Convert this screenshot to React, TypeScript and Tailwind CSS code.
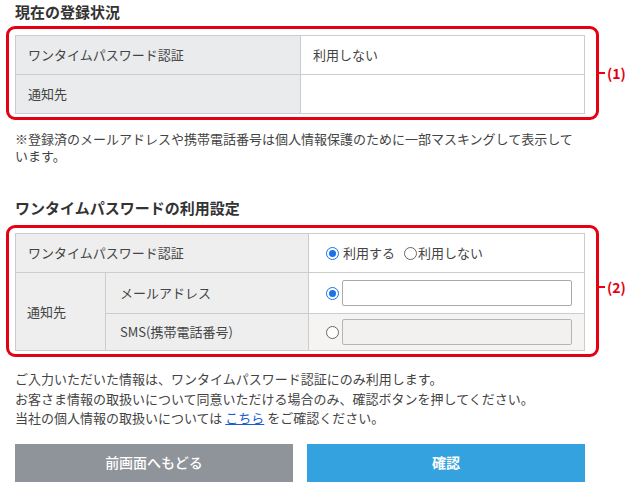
import React from "react";

function Radio({ checked }: { checked?: boolean }) {
  return checked ? (
    <span className="w-[13px] h-[13px] rounded-full border-[1.5px] border-[#1a73e8] bg-white flex items-center justify-center shrink-0">
      <span className="w-[7px] h-[7px] rounded-full bg-[#1a73e8]" />
    </span>
  ) : (
    <span className="block w-[13px] h-[13px] rounded-full border border-[#666] bg-white shrink-0" />
  );
}

function RedBox({ label, children, pt, labelShift }: { label: string; children: React.ReactNode; pt: string; labelShift: string }) {
  return (
    <div className={`relative w-[593px] border-[3px] border-[#e50012] rounded-[9px] pl-[6px] pr-[11px] pb-[3px] ${pt}`}>
      {children}
      <div className={`absolute left-full top-1/2 flex items-center ${labelShift}`}>
        <span className="w-[9px] h-[2px] bg-[#e50012]" />
        <span className="ml-[2px] text-[14px] font-bold leading-none text-[#e50012]">{label}</span>
      </div>
    </div>
  );
}

export default function App() {
  return (
    <div className="w-[630px] h-[490px] bg-white overflow-hidden text-[#444] font-['Meiryo','Noto_Sans_CJK_JP',sans-serif]">
      <div className="pl-[6px] pt-[2px]">
        <h2 className="pl-[9px] text-[15px] font-bold leading-[20px] text-[#333]">現在の登録状況</h2>

        <div className="mt-[4px]">
          <RedBox label="(1)" pt="pt-[6px]" labelShift="-translate-y-1/2">
            <div className="border border-[#cccccc] text-[13px]">
              <div className="flex h-[39px] border-b border-[#cccccc]">
                <div className="w-[285px] bg-[#eaebed] border-r border-[#cccccc] pl-[12px] flex items-center">ワンタイムパスワード認証</div>
                <div className="flex-1 pl-[12px] flex items-center">利用しない</div>
              </div>
              <div className="flex h-[38px]">
                <div className="w-[285px] bg-[#eaebed] border-r border-[#cccccc] pl-[12px] flex items-center">通知先</div>
                <div className="flex-1" />
              </div>
            </div>
          </RedBox>
        </div>

        <p className="pl-[9px] mt-[10px] w-[571px] text-[13px] leading-[17px]">
          ※登録済のメールアドレスや携帯電話番号は個人情報保護のために一部マスキングして表示しています。
        </p>

        <h2 className="pl-[9px] mt-[34px] text-[15px] font-bold leading-[20px] text-[#333]">ワンタイムパスワードの利用設定</h2>

        <div className="mt-[7px]">
          <RedBox label="(2)" pt="pt-[5px]" labelShift="-translate-y-[calc(50%+4px)]">
            <div className="border border-[#cccccc] text-[13px]">
              <div className="flex h-[39px] border-b border-[#cccccc]">
                <div className="w-[293px] bg-[#eeeeee] border-r border-[#cccccc] pl-[12px] flex items-center">ワンタイムパスワード認証</div>
                <div className="flex-1 pl-[17px] flex items-center">
                  <Radio checked />
                  <span className="ml-[4px]">利用する</span>
                  <span className="ml-[9px] flex items-center"><Radio /></span>
                  <span className="ml-[1px]">利用しない</span>
                </div>
              </div>
              <div className="flex">
                <div className="w-[90px] bg-[#eeeeee] border-r border-[#cccccc] pl-[11px] flex items-center">通知先</div>
                <div className="flex-1 flex flex-col">
                  <div className="flex h-[41px] border-b border-[#cccccc]">
                    <div className="w-[203px] bg-[#eeeeee] border-r border-[#cccccc] pl-[14px] flex items-center">メールアドレス</div>
                    <div className="flex-1 pl-[17px] flex items-center">
                      <Radio checked />
                      <span className="ml-[3px] w-[230px] h-[26px] border border-[#aaaaaa] rounded-[2px] bg-white" />
                    </div>
                  </div>
                  <div className="flex h-[36px]">
                    <div className="w-[203px] bg-[#eeeeee] border-r border-[#cccccc] pl-[14px] flex items-center">SMS(携帯電話番号)</div>
                    <div className="flex-1 pl-[17px] flex items-center bg-[#f6f4f3]">
                      <Radio />
                      <span className="ml-[3px] w-[230px] h-[26px] border border-[#b5b5b5] rounded-[2px] bg-[#f3f1f0]" />
                    </div>
                  </div>
                </div>
              </div>
            </div>
          </RedBox>
        </div>

        <div className="pl-[9px] mt-[12px] text-[13px] leading-[19.5px]">
          <p>ご入力いただいた情報は、ワンタイムパスワード認証にのみ利用します。</p>
          <p>お客さま情報の取扱いについて同意いただける場合のみ、確認ボタンを押してください。</p>
          <p>
            当社の個人情報の取扱いについては <a className="text-[#1a5dd0] underline" href="#">こちら</a> をご確認ください。
          </p>
        </div>

        <div className="pl-[9px] mt-[16px] flex gap-[14px]">
          <button className="w-[278px] h-[38px] bg-[#8f939a] text-white text-[14px] font-medium">前画面へもどる</button>
          <button className="w-[278px] h-[38px] bg-[#35a2e0] text-white text-[14px] font-bold">確認</button>
        </div>
      </div>
    </div>
  );
}
